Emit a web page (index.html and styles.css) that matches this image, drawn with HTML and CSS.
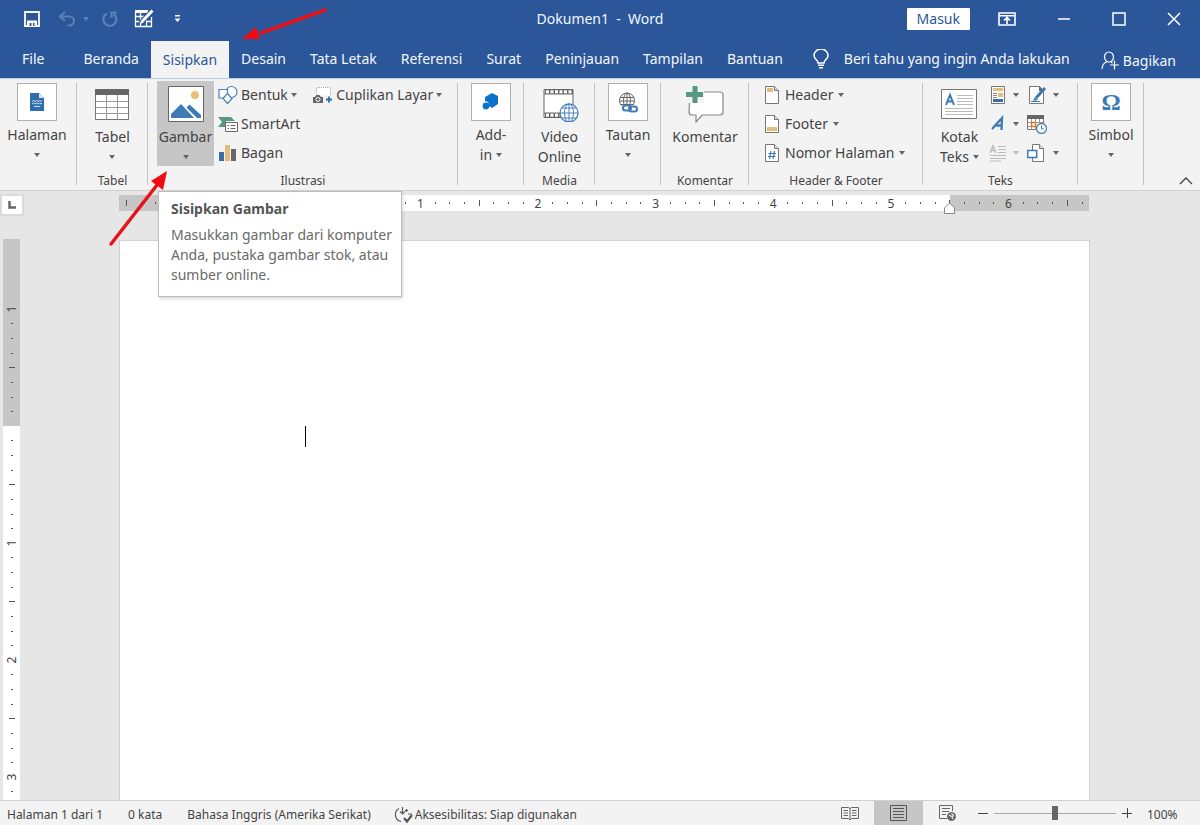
FILE: index.html
```html
<!DOCTYPE html>
<html lang="id">
<head>
<meta charset="utf-8">
<title>Dokumen1 - Word</title>
<link rel="stylesheet" href="styles.css">
</head>
<body>
<div class="app">
  <header class="header">
    <div class="titlebar">
      <div class="quick">
        <button class="quick-btn save" aria-label="Simpan"><svg width="16" height="16" viewBox="0 0 16 16"><path d="M1 1h14v14H1z" fill="none" stroke="#fff" stroke-width="1.800"/><path d="M3 9.500h10V15H3z" fill="#fff"/><path d="M5.500 12h2v3h-2zM9 12h1.500v3H9z" fill="#2b579a"/></svg></button>
        <button class="quick-btn undo" aria-label="Urungkan"><svg width="18" height="16" viewBox="0 0 18 16" fill="none" stroke="#5b7fb6" stroke-width="2.200"><path d="M7 1 2 5.500l5 4.500M2.500 5.500H11a5 4.500 0 0 1 0 9H9.500"/></svg></button>
        <span class="caret dim"></span>
        <button class="quick-btn redo" aria-label="Ulangi"><svg width="18" height="18" viewBox="0 0 18 18" fill="none" stroke="#5b7fb6" stroke-width="2.200"><path d="M6 3.500A6.500 6.500 0 1 0 12.500 4M10.500 8V2.500H16"/></svg></button>
        <button class="quick-btn draw" aria-label="Gambar tabel"><svg width="20" height="19" viewBox="0 0 20 19" fill="none" stroke="#fff"><path d="M1 2.500h13" stroke-width="3"/><path d="M1.500 3v14.500h16V8M1 7.500h9M1 12.500h6M12 12.500h6M6.500 4v14M12.500 11v7" stroke-width="1.300"/><path d="M6.500 14 18.500 1.500" stroke="#2b579a" stroke-width="5"/><path d="M8 12.500 18.500 1.500" stroke-width="3"/><path d="m6 15 1-3.500 2.500 2.300z" fill="#fff" stroke="none"/></svg></button>
        <button class="quick-btn more" aria-label="Kustomisasi"><svg width="7" height="8" viewBox="0 0 7 8" fill="#fff"><path d="M1 0h5v1.400H1zM.5 3.500h6l-3 3.500z"/></svg></button>
      </div>
      <h1 class="window-title">Dokumen1&nbsp; -&nbsp; Word</h1>
      <div class="window-controls">
        <button class="signin">Masuk</button>
        <button class="win-btn" aria-label="Opsi pita"><svg width="18" height="14" viewBox="0 0 18 14" fill="none" stroke="#fff" stroke-width="1.600"><path d="M1 1h16v12H1zM1 3.700h16M9 12V6M6 8.500l3-3 3 3"/></svg></button>
        <button class="win-btn" aria-label="Kecilkan"><svg width="14" height="14" viewBox="0 0 14 14" stroke="#fff" stroke-width="1.500"><path d="M1 7h12"/></svg></button>
        <button class="win-btn" aria-label="Perbesar"><svg width="14" height="14" viewBox="0 0 14 14" fill="none" stroke="#fff" stroke-width="1.500"><path d="M1 1h12v12H1z"/></svg></button>
        <button class="win-btn" aria-label="Tutup"><svg width="14" height="14" viewBox="0 0 14 14" stroke="#fff" stroke-width="1.500"><path d="m1 1 12 12M13 1 1 13"/></svg></button>
      </div>
    </div>
    <nav class="tabs">
      <button class="tab file">File</button>
      <button class="tab">Beranda</button>
      <button class="tab active">Sisipkan</button>
      <button class="tab">Desain</button>
      <button class="tab">Tata Letak</button>
      <button class="tab">Referensi</button>
      <button class="tab">Surat</button>
      <button class="tab">Peninjauan</button>
      <button class="tab">Tampilan</button>
      <button class="tab">Bantuan</button>
      <button class="tab tell"><svg width="16" height="20" viewBox="0 0 16 20" fill="none" stroke="#fff" stroke-width="1.500"><path d="M5 14c0-3-4-4-4-7.500a6.500 6 0 0 1 14 0C15 10 11 11 11 14zM5 16.300h6M6 18.700h4"/></svg>Beri tahu yang ingin Anda lakukan</button>
      <button class="tab share"><svg width="18" height="19" viewBox="0 0 18 19" fill="none" stroke="#fff" stroke-width="1.200"><ellipse cx="8" cy="6" rx="4.500" ry="5"/><path d="M1 18c0-4 2-6 5-7.200M10 11l1.500 1M13.500 9.500v9M9 14h9"/></svg>Bagikan</button>
    </nav>
    <svg class="pointer pointer-tab" width="90" height="40" viewBox="0 0 90 40" aria-hidden="true"><path d="M84 10 20 33" stroke="#e5141c" stroke-width="3.500" stroke-linecap="round"/><path d="m1 39 14-12 4 12z" fill="#f00b10"/></svg>
  </header>

  <section class="ribbon">
    <div class="group g-pages">
      <button class="big"><span class="art boxed"><svg width="40" height="38" viewBox="0 0 40 38"><path d="M13 10h9l5 5v13H13z" fill="#2e6da9"/><path d="M22 10v5h5" fill="#d9e6f4"/><path d="M15 18.500l1.500-1 1.500 1 1.500-1 1.500 1 1.500-1 1.500 1 1-1M15 21l1.500-1 1.500 1 1.500-1 1.500 1 1.500-1 1.500 1 1-1M17 23.500h6" fill="none" stroke="#cfe0f2"/></svg></span>Halaman<span class="caret"></span></button>
    </div>
    <div class="group g-table">
      <button class="big"><span class="art"><svg width="34" height="32" viewBox="0 0 34 32"><path d="M.5 1.500h33v30H.5z" fill="#fff" stroke="#777"/><path d="M0 1h34v6H0z" fill="#666"/><path d="M1 13.500h32M1 19.500h32M1 25.500h32M11.500 7v24M22.500 7v24" stroke="#999"/></svg></span>Tabel<span class="caret"></span></button>
      <h2>Tabel</h2>
    </div>
    <div class="group g-illus">
      <div class="tools">
        <div class="picture">
          <button class="big pressed" aria-describedby="tip"><span class="art"><svg width="36" height="36" viewBox="0 0 36 36"><path d="M.5.5h35v35H.5z" fill="#fff" stroke="#666"/><circle cx="27" cy="9" r="4" fill="#e6c07b"/><path d="M3 32v-4l10-10 13 14zM18.500 21.500l3-3L33 29v3h-4z" fill="#3d7ab8"/></svg></span>Gambar<span class="caret"></span></button>
          <div class="tooltip" id="tip" role="tooltip"><h3>Sisipkan Gambar</h3><p>Masukkan gambar dari komputer Anda, pustaka gambar stok, atau sumber online.</p></div>
          <svg class="pointer pointer-picture" width="62" height="78" viewBox="0 0 62 78" aria-hidden="true"><path d="M3 74 49 15" stroke="#e5141c" stroke-width="3.500" stroke-linecap="round"/><path d="M59 1 55 20 43 11z" fill="#f00b10"/></svg>
        </div>
        <div class="stack">
          <button class="small"><svg width="20" height="20" viewBox="0 0 20 20" fill="#fff" stroke="#4a7fb8" stroke-width="1.200"><circle cx="13.500" cy="7" r="5.500"/><path d="M1 4.500h8.500v8.500H1z"/><path d="m9.500 8.500 4.500 5-4.500 5-4.500-5z"/></svg>Bentuk<span class="caret"></span></button>
          <button class="small"><svg width="20" height="18" viewBox="0 0 20 18"><path d="M0 2h13l4 4H8v6H0l4-5z" fill="#579980"/><path d="M7.500 7.500h12v9h-12z" fill="#fff" stroke="#666"/><path d="M9.500 10.500h1.500M12.500 10.500h5M9.500 13.500h1.500M12.500 13.500h5" stroke="#666"/></svg>SmartArt</button>
          <button class="small"><svg width="20" height="18" viewBox="0 0 20 18"><path d="M1 8h5v9H1z" fill="#3c6ea6"/><path d="M7 1h5v16H7z" fill="#e4bd7d"/><path d="M13 5h5v12h-5z" fill="#666"/></svg>Bagan</button>
        </div>
        <div class="stack capture">
          <button class="small"><svg width="20" height="20" viewBox="0 0 20 20"><path d="M3.500 10V2.500h14V11" fill="#fff" stroke="#aaa" stroke-dasharray="1 1"/><path d="M0 12h2l1.500-2h3L8 12h2v6H0z" fill="#666"/><circle cx="5" cy="14.500" r="2" fill="none" stroke="#fff"/><path d="M16 11.500v6M13 14.500h6" stroke="#2e6da9" stroke-width="1.800"/></svg>Cuplikan Layar<span class="caret"></span></button>
        </div>
      </div>
      <h2>Ilustrasi</h2>
    </div>
    <div class="group g-addin">
      <button class="big"><span class="art boxed"><svg width="40" height="38" viewBox="0 0 40 38" fill="#0a73c9"><path d="m21 10 6 3v8l-6 4-3-2a4 4 0 0 0-4-5v-4z"/><circle cx="15" cy="23" r="3.400"/></svg></span>Add-<span class="line">in<span class="caret"></span></span></button>
    </div>
    <div class="group g-media">
      <button class="big"><span class="art"><svg width="40" height="36" viewBox="-4 0 40 36" fill="none"><path d="M1 3.500h29v28H1z" fill="#fff" stroke="#666"/><path d="M1 8h29M1 27h29" stroke="#666"/><path d="M2 5.700h28M2 29.300h28" stroke="#666" stroke-width="4"/><path d="M3 5.700h27M3 29.300h27" stroke="#fff" stroke-width="3" stroke-dasharray="3 1.500"/><circle cx="26" cy="27" r="9" fill="#fff" stroke="#4a7fb8" stroke-width="1.300"/><path d="M17 27h18M26 18v18M19 22h14M19 32h14" stroke="#4a7fb8"/><ellipse cx="26" cy="27" rx="4.500" ry="9" stroke="#4a7fb8"/></svg></span>Video<span class="line">Online</span></button>
      <h2>Media</h2>
    </div>
    <div class="group g-link">
      <button class="big"><span class="art boxed"><svg width="40" height="38" viewBox="0 0 40 38" fill="none"><g stroke="#666"><circle cx="19" cy="17.500" r="7.500"/><ellipse cx="19" cy="17.500" rx="3.500" ry="7.500"/><path d="M12 14.500h14M11.500 18h15M12.500 21.500h13M19 10v15"/></g><path d="M14 22h16v8H14z" fill="#fff"/><g stroke="#3e7ab8" stroke-width="2"><rect x="15" y="22.500" width="8" height="5" rx="2.500"/><rect x="21" y="23.500" width="8" height="5" rx="2.500"/></g></svg></span>Tautan<span class="caret"></span></button>
    </div>
    <div class="group g-comment">
      <button class="big"><span class="art"><svg width="38" height="38" viewBox="0 0 38 38"><path d="M4 7h30q3 0 3 3v17q0 3-3 3H16l-6 7v-7H6q-3 0-3-3z" fill="#fff" stroke="#888" stroke-width="1.200"/><path d="M0 6h18v12H0z" fill="#f3f3f3"/><path d="M3.500 18v2" stroke="#888"/><path d="M9 1v17M0 9.500h17" stroke="#579980" stroke-width="5"/></svg></span>Komentar</button>
      <h2>Komentar</h2>
    </div>
    <div class="group g-header">
      <div class="stack">
        <button class="small"><svg width="16" height="18" viewBox="0 0 16 18"><path d="M1.500.5h9l4 4v13h-13z" fill="#fff" stroke="#777"/><path d="M10.500.5v4h4" fill="#ddd" stroke="#777"/><path d="M3 2h6v4H3z" fill="#e4bd7d"/></svg>Header<span class="caret"></span></button>
        <button class="small"><svg width="16" height="18" viewBox="0 0 16 18"><path d="M1.500.5h9l4 4v13h-13z" fill="#fff" stroke="#777"/><path d="M10.500.5v4h4" fill="#ddd" stroke="#777"/><path d="M3 12h10v4H3z" fill="#e4bd7d"/></svg>Footer<span class="caret"></span></button>
        <button class="small"><svg width="16" height="18" viewBox="0 0 16 18"><path d="M1.500.5h9l4 4v13h-13z" fill="#fff" stroke="#777"/><path d="M10.500.5v4h4" fill="#ddd" stroke="#777"/><path d="m7 7-1.500 8M10.500 7 9 15M4.500 9.500H12M4 12.500h7.500" stroke="#3e7ab8" stroke-width="1.200"/></svg>Nomor Halaman<span class="caret"></span></button>
      </div>
      <h2>Header &amp; Footer</h2>
    </div>
    <div class="group g-text">
      <div class="tools">
        <button class="big"><span class="art"><svg width="36" height="30" viewBox="0 0 36 30"><path d="M.5.5h35v29H.5z" fill="#fff" stroke="#777"/><path d="m5 16 4-10 4 10M6.500 12.500h5" fill="none" stroke="#3e7ab8" stroke-width="2"/><path d="M16 6.500h16M16 9.500h16M16 12.500h16M16 15.500h16M4 19.500h28M4 22.500h28M4 25.500h28" stroke="#bbb"/></svg></span>Kotak<span class="line">Teks<span class="caret"></span></span></button>
        <div class="stack icons">
          <button class="small" aria-label="Bagian Cepat"><svg width="18" height="18" viewBox="0 0 18 18"><path d="M2.500.5h13v17h-13z" fill="#fff" stroke="#777"/><path d="M4 2h10v3H4z" fill="#e4bd7d"/><path d="M4 7.500h4M4 9.500h4M4 11.500h4" stroke="#888"/><path d="M9 7h5v4H9z" fill="#e4bd7d"/><path d="M4 13h10v3H4z" fill="#3c6ea6"/></svg><span class="caret"></span></button>
          <button class="small" aria-label="WordArt"><svg width="18" height="18" viewBox="0 0 18 18" fill="none" stroke="#3e7ab8" stroke-width="2.300"><path d="M3 14 13 3l-.5 12M6 10.500h7"/></svg><span class="caret"></span></button>
          <button class="small" aria-label="Hilangkan Kapital" disabled><svg width="18" height="18" viewBox="0 0 18 18" fill="none" stroke="#bbb"><path d="m1 9 3-7 3 7M2 6.500h4" stroke-width="1.500"/><path d="M9 2.500h8M9 5.500h8M9 8.500h8M1 11.500h16M1 14.500h16M1 17h11"/></svg><span class="caret"></span></button>
        </div>
        <div class="stack icons">
          <button class="small" aria-label="Baris Tanda Tangan"><svg width="20" height="19" viewBox="0 0 20 19"><path d="M2.500.5h10l4 4v13h-14z" fill="#fff" stroke="#777"/><path d="M12 0v5h5" fill="#666"/><path d="M9 12 18 2" stroke="#3e7ab8" stroke-width="3"/><path d="m6 15 2-4 3 3z" fill="#3e7ab8"/><path d="M4 15.500h9" stroke="#3e7ab8"/></svg><span class="caret"></span></button>
          <button class="small" aria-label="Tanggal dan Waktu"><svg width="20" height="20" viewBox="0 0 20 20" fill="none"><path d="M.5 2.500h16v13H.5z" fill="#fff" stroke="#777"/><path d="M0 1h17v4H0z" fill="#666"/><path d="M1 8.500h15M1 12.500h15M4.500 5v11M8.500 5v11M12.500 5v11" stroke="#999"/><path d="M4.500 8.500h4v4h-4z" stroke="#dc7b2b" stroke-width="1.500"/><circle cx="14.500" cy="14.500" r="5" fill="#fff" stroke="#4a7fb8" stroke-width="1.300"/><path d="M14.500 11.500v3.500H17" stroke="#4a7fb8"/></svg></button>
          <button class="small" aria-label="Objek"><svg width="20" height="19" viewBox="0 0 20 19" fill="#fff"><path d="M5.500.5h7l4 4v13h-11z" stroke="#777"/><path d="M12.500.5v4h4" fill="#ddd" stroke="#777"/><path d="M.7 6.500h9v7h-9z" stroke="#3e7ab8" stroke-width="1.500"/></svg><span class="caret"></span></button>
        </div>
      </div>
      <h2>Teks</h2>
    </div>
    <div class="group g-symbol">
      <button class="big"><span class="art boxed omega">Ω</span>Simbol<span class="caret"></span></button>
    </div>
    <button class="collapse" aria-label="Ciutkan pita"><svg width="14" height="8" viewBox="0 0 14 8" fill="none" stroke="#444" stroke-width="1.300"><path d="m1 7 6-6 6 6"/></svg></button>
  </section>

  <main class="workspace">
    <div class="ruler-row">
      <button class="tab-stop" aria-label="Tab kiri"><svg width="8" height="8" viewBox="0 0 8 8"><path d="M1.500 0v6.500H8" fill="none" stroke="#666" stroke-width="2.500"/></svg></button>
      <div class="ruler-h" id="ruler-h"></div>
    </div>
    <div class="canvas">
      <div class="ruler-v" id="ruler-v"></div>
      <article class="page"><span class="text-cursor"></span></article>
    </div>
  </main>

  <footer class="status">
    <span class="st-page">Halaman 1 dari 1</span>
    <span class="st-words">0 kata</span>
    <span class="st-lang">Bahasa Inggris (Amerika Serikat)</span>
    <span class="st-access"><svg width="20" height="18" viewBox="0 0 20 18" fill="none" stroke="#555" stroke-width="1.200"><path d="M5 2.500a7 7 0 0 0 2 13M8.500 1v7M6 5.500l2.500 2.500L11 5.500M12.500 3v3M11 4.500h3M14 8h4"/><path d="m10 12 3 3.500 5-6.500" stroke-width="2.200"/></svg>Aksesibilitas: Siap digunakan</span>
    <div class="views">
      <button class="view" aria-label="Mode baca"><svg width="18" height="15" viewBox="0 0 18 15" fill="none" stroke="#666"><path d="M.5 1.500h7l1.500 1 1.500-1h7v11h-7L9 14l-1.500-1.500h-7zM9 2v12M2.500 4.500H7M2.500 7H7M2.500 9.500H7M11 4.500h4.500M11 7h4.500M11 9.500h4.500"/></svg></button>
      <button class="view current" aria-label="Tata letak cetak"><svg width="17" height="16" viewBox="0 0 17 16" fill="none" stroke="#555"><path d="M.5.500h16v15H.5zM3 3.500h11M3 6.500h11M3 9.500h11M3 12.500h11"/></svg></button>
      <button class="view" aria-label="Tata letak web"><svg width="17" height="16" viewBox="0 0 17 16" fill="none" stroke="#666"><path d="M8 13.500H.5V.5h13V6M3 3.500h8M3 6.500h7M3 9.500h4"/><circle cx="12.500" cy="11.500" r="4" fill="#666"/><path d="m10 10 2.500 1.500M12.500 8.500l2 2-1.500 1.500 1 2" stroke="#eee" stroke-width="1.200"/></svg></button>
    </div>
    <div class="zoom">
      <button aria-label="Perkecil tampilan"><svg width="10" height="10" viewBox="0 0 10 10" stroke="#444"><path d="M0 5.500h10"/></svg></button>
      <input type="range" aria-label="Zoom" min="0" max="200" value="100">
      <button aria-label="Perbesar tampilan"><svg width="10" height="10" viewBox="0 0 10 10" stroke="#444"><path d="M0 5.500h10M5.500 0v10"/></svg></button>
    </div>
    <span class="zoom-value">100%</span>
  </footer>
</div>
<script src="rulers.js"></script>
</body>
</html>
```

FILE: styles.css
```css
* { box-sizing: border-box; }

body {
  margin: 0;
  font-family: "Noto Sans", "Open Sans", sans-serif;
  font-size: 14px;
  line-height: 20px;
  color: #444;
}

button {
  margin: 0;
  padding: 0;
  border: 0;
  background: none;
  color: inherit;
  font: inherit;
  white-space: nowrap;
}

svg { display: block; flex: none; }
h1, h2, h3, p { margin: 0; font-weight: 400; }

.app { display: flex; flex-direction: column; min-height: 100vh; }

.caret {
  flex: none;
  border: 3px solid transparent;
  border-top: 4px solid #666;
  border-bottom: 0;
}
.caret.dim { border-top-color: #5b7fb6; }

/* Title bar and tabs */
.header {
  position: relative;
  background: #2b579a;
  color: #f3f6fb;
}
.titlebar {
  display: grid;
  grid-template-columns: 1fr auto 1fr;
  align-items: center;
  height: 37px;
}
.quick { display: flex; align-items: center; padding-left: 24px; }
.undo { margin-left: 18px; }
.quick .caret { margin-left: 7px; }
.redo { margin-left: 12px; }
.draw { margin-left: 15px; }
.more { margin-left: 20px; }
.window-title { font-size: 14px; }
.window-controls {
  display: flex;
  align-items: center;
  justify-content: flex-end;
  padding-right: 19px;
}
.signin {
  padding: 1px 10px;
  margin-right: 28px;
  background: #fff;
  color: #2b579a;
  border-radius: 1px;
}
.win-btn + .win-btn { margin-left: 41px; }
.tabs { display: flex; height: 41px; padding-left: 10px; }
.tab {
  display: flex;
  align-items: center;
  padding: 3px 12px 0;
}
.tab.file { margin-right: 15px; }
.tab.active { margin-top: 4px; padding-top: 0; background: #f3f3f3; color: #2b579a; }
.tell { gap: 15px; padding-left: 18px; }
.share { gap: 4px; margin-left: auto; padding: 6px 24px 0 0; }

.pointer { position: absolute; z-index: 3; }
.pointer-tab { left: 241px; top: 0; }
.pointer-picture { left: -40px; top: 89px; }

/* Ribbon */
.ribbon {
  display: flex;
  padding: 2px 0 1px;
  background: #f3f3f3;
  border-top: 1px solid #b4cbea;
  border-bottom: 1px solid #d0d0d0;
}
.group {
  position: relative;
  display: flex;
  flex-direction: column;
  align-items: center;
  min-height: 108px;
}
.group::after {
  content: "";
  position: absolute;
  inset: 2px 0 4px auto;
  border-right: 1px solid #c3c3c3;
}
.group h2 {
  margin-top: auto;
  font-size: 12px;
  line-height: 16px;
}
.g-pages { width: 77px; padding-right: 3px; }
.g-table { width: 71px; }
.g-illus { width: 310px; }
.g-addin { width: 66px; }
.g-media { width: 71px; }
.g-link { width: 66px; }
.g-comment { width: 88px; }
.g-header { width: 174px; }
.g-text { width: 155px; }
.g-symbol { width: 66px; }

.big { display: flex; flex-direction: column; align-items: center; }
.big > .caret { margin: 8px 0 7px; }
.art {
  display: flex;
  align-items: center;
  justify-content: center;
  height: 46px;
}
.art.boxed {
  width: 40px;
  height: 38px;
  margin: 2px 0 4px;
  background: #fff;
  border: 1px solid #b0b0b0;
}
.omega { color: #3e7ab8; font: bold 24px/24px "Liberation Serif", serif; }
.line { display: flex; align-items: center; gap: 4px; }
.pressed { width: 57px; background: #c6c6c6; }

.tools { display: flex; width: 100%; }
.picture { position: relative; padding-left: 9px; }
.stack { display: flex; flex-direction: column; gap: 1px; }
.small {
  display: flex;
  align-items: center;
  gap: 3px;
  height: 28px;
}
.g-illus .stack { padding-left: 4px; }
.g-illus .capture { padding-left: 13px; }
.small:disabled { color: #bbb; }
.small:disabled .caret { border-top-color: #bbb; }
.g-header .stack { width: 100%; padding-left: 15px; }
.g-header .small { gap: 5px; }
.g-text .tools { padding-left: 17px; gap: 10px; }
.icons .small { gap: 6px; }
.icons + .icons { margin-left: -2px; }
.collapse { margin: auto 7px 0 auto; padding: 4px 0; }

.tooltip {
  position: absolute;
  z-index: 2;
  left: 10px;
  top: 110px;
  width: 244px;
  padding: 7px 6px 11px 12px;
  background: #fff;
  border: 1px solid #bebebe;
  box-shadow: 1px 2px 3px #00000026;
  color: #6a6a6a;
}
.tooltip h3 {
  font-size: 14px;
  font-weight: 700;
  color: #555;
  margin-bottom: 6px;
}

/* Rulers and page */
.workspace {
  flex: 1;
  display: flex;
  flex-direction: column;
  background: #e6e6e6;
}
.ruler-row { display: flex; padding: 3px 111px 0 0; height: 48px; align-items: flex-start; }
.tab-stop {
  display: grid;
  place-items: center;
  width: 24px;
  height: 22px;
  margin-right: 95px;
  background: #fff;
  border: 2px solid #dadada;
}
.ruler-h {
  flex: 1;
  display: flex;
  height: 16px;
  margin-top: 1px;
  background: #fff;
  font-size: 12px;
  line-height: 18px;
}
.cell { display: grid; place-items: center; flex: 1 1 0; min-width: 0; min-height: 0; }
.margin { background: #c6c6c6; }
.edge-right { position: relative; background: linear-gradient(90deg, #fff 50%, #c6c6c6 50%); }
.edge-left { background: linear-gradient(90deg, #c6c6c6 50%, #fff 50%); }
.indent { position: absolute; left: 2px; top: 7px; }
.dot { width: 1px; height: 2px; background: #555; }
.bar { width: 1px; height: 6px; background: #555; }
.canvas { flex: 1; display: flex; padding-right: 111px; }
.ruler-v {
  width: 17px;
  margin: 0 100px 0 3px;
  padding-top: 63px;
  background: linear-gradient(#c6c6c6 187px, #fff 187px);
  font-size: 12px;
  height: 562px;
  overflow: hidden;
}
.inch { display: flex; flex-direction: column; height: 117px; }
.ruler-v .number { padding-top: 2px; line-height: 12px; transform: rotate(-90deg); }
.ruler-v .dot { width: 2px; height: 1px; }
.ruler-v .bar { width: 6px; height: 1px; }
.page {
  flex: 1;
  margin-top: 2px;
  padding: 185px;
  background: #fff;
  box-shadow: 0 0 0 1px #d2d2d2;
}
.text-cursor { display: block; width: 1px; height: 21px; background: #000; }

/* Status bar */
.status {
  position: relative;
  display: flex;
  align-items: center;
  height: 24px;
  padding-left: 7px;
  background: #f3f3f3;
  box-shadow: 0 -1px #d0d0d0;
  font-size: 12px;
}
.status > span { padding-top: 3px; }
.st-words { margin-left: 25px; }
.st-lang { margin-left: 25px; }
.st-access { display: flex; align-items: center; gap: 1px; margin-left: 23px; }
.views { display: flex; align-self: stretch; margin-left: auto; }
.view { display: grid; place-items: center; width: 49px; }
.view.current { background: #c6c6c6; }
.zoom { display: flex; align-items: center; gap: 6px; margin-left: 6px; }
.zoom input {
  appearance: none;
  width: 122px;
  height: 16px;
  margin: 0;
  background: linear-gradient(#aaa, #aaa) center / 100% 1px no-repeat;
}
.zoom input::-webkit-slider-thumb {
  appearance: none;
  width: 6px;
  height: 14px;
  background: #666;
}
.zoom-value { width: 53px; margin-left: 15px; }
```

FILE: rulers.js
```js
function mark(kind, text) {
  const cell = document.createElement("span");
  cell.className = "cell";
  const inner = document.createElement("span");
  inner.className = kind;
  if (text) inner.textContent = text;
  cell.append(inner);
  return cell;
}

// Horizontal: eighths of an inch, zero at the left page margin (cell 12).
const across = document.getElementById("ruler-h");
for (let i = 0; i < 66; i++) {
  let cell;
  if (i <= 12 && i % 8 === 4) cell = mark("blank");
  else if (i % 8 === 4) cell = mark("number", String((i - 12) / 8));
  else cell = mark(i % 8 === 0 ? "bar" : "dot");
  if (i < 12 || i > 56) cell.classList.add("margin");
  if (i === 12) cell.classList.add("edge-left");
  if (i === 56) {
    cell.classList.add("edge-right");
    cell.insertAdjacentHTML("beforeend", '<svg class="indent" width="11" height="12" viewBox="0 0 11 12"><path d="M.5 11.500V6L5.500 1l5 5v5.500z" fill="#fff" stroke="#888"/></svg>');
  }
  across.append(cell);
}

// Vertical: one block per inch, starting an inch above the top margin.
const down = document.getElementById("ruler-v");
["1", "", "1", "2", "3"].forEach((label) => {
  const inch = document.createElement("div");
  inch.className = "inch";
  inch.append(mark("number", label));
  for (let i = 1; i < 8; i++) inch.append(mark(i === 4 ? "bar" : "dot"));
  down.append(inch);
});
```
